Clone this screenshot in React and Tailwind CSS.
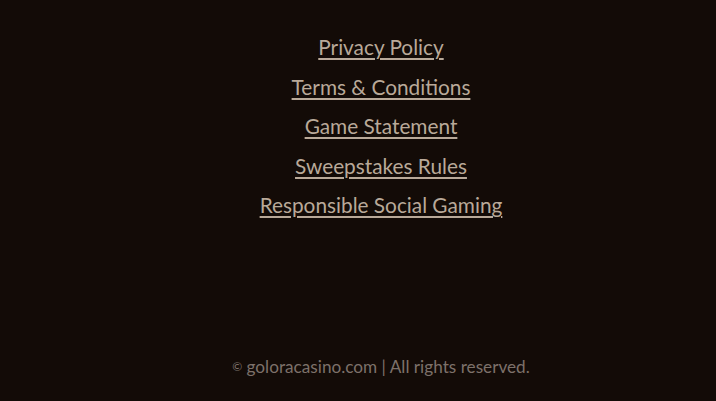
export default function App() {
  const links = ["Privacy Policy", "Terms & Conditions", "Game Statement", "Sweepstakes Rules", "Responsible Social Gaming"];
  return (
    <div className="w-[716px] h-[401px] bg-[#130b07] flex flex-col items-center" style={{ fontFamily: "Lato, 'Open Sans', sans-serif" }}>
      <div className="flex flex-col items-center pt-[33px] gap-[11px] ml-[46px]">
        {links.map((l) => (
          <a key={l} href="#" className="text-[20.8px] leading-[28.5px] text-[#b9a999] underline underline-offset-[3px] decoration-[1.5px]">
            {l}
          </a>
        ))}
      </div>
      <div className="mt-auto mb-[23px] ml-[46px] text-[17.2px] leading-[22px] text-[#7d716a]">
        <span className="text-[12px] align-top">©</span> goloracasino.com | All rights reserved.
      </div>
    </div>
  );
}
